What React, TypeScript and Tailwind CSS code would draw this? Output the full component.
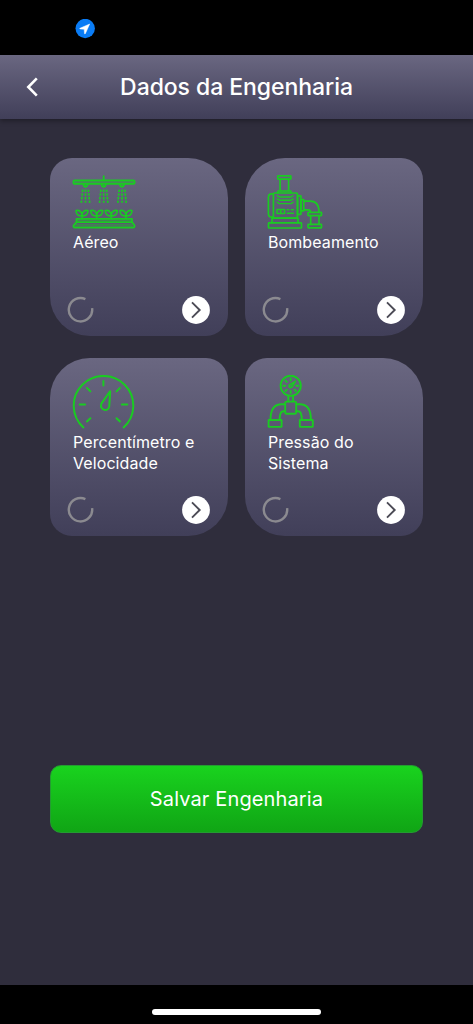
import type { ReactNode } from "react";

function SprinklerIcon() {
  return (
    <svg width="64" height="55" viewBox="0 0 64 55" fill="none" stroke="#1acb22" strokeWidth="1.8" strokeLinecap="round" strokeLinejoin="round">
      <rect x="1.4" y="5.4" width="61.2" height="3.4" rx="1" fill="#1acb22" fillOpacity="0.4" />
      <path d="M31.7 1.2V5" />
      {[13.5, 31.7, 50].map((x) => (
        <g key={x} transform={`translate(${x} 0)`}>
          <path d="M-2 9.2c0 3.4 4 3.4 4 0" />
          <path d="M0 14.6v13.2M-2.8 14.6l-1.4 13.2M2.8 14.6l1.4 13.2" strokeDasharray="2.4 1.3" strokeWidth="1.7" strokeLinecap="butt" />
        </g>
      ))}
      {[10, 24.7, 39.3, 54].map((x) => (
        <path
          key={x}
          transform={`translate(${x} 0)`}
          d="M0 43V40M0 40.6C-3.6 41.6-6 39.4-6 35.5c3.6-.6 6 1.2 6 5.1ZM0 40.6C3.6 41.6 6 39.4 6 35.5c-3.6-.6-6 1.2-6 5.1Z"
          strokeWidth="1.6"
        />
      ))}
      <path d="M4.5 47.6V43.8H60v3.8M4.5 47.2h55.8l2.3 3.4c.2 1.1-.4 1.9-1.3 1.9H2.7c-1 0-1.5-.8-1.2-1.9Z" />
      <path d="M6 45.4h53M4 49.8h56" strokeOpacity="0.4" />
    </svg>
  );
}

function PumpIcon() {
  return (
    <svg width="64" height="55" viewBox="0 0 64 55" fill="none" stroke="#1acb22" strokeWidth="1.7" strokeLinecap="round" strokeLinejoin="round">
      <rect x="10.7" y="0.9" width="13.2" height="3.2" rx="0.6" />
      <path d="M13.1 4.1V16M21.6 4.1V16M10.9 18v-2h13v2" />
      <rect x="6.4" y="18" width="24" height="25" rx="1" />
      <path d="M6.4 18.8H4.8c-2 0-3.4 1.4-3.4 3.4v16.6c0 2 1.4 3.4 3.4 3.4h1.6" />
      <path d="M10.3 20.6l2 1.4h11.8l2-1.4M10.3 23.9l2 1.4h11.8l2-1.4M10.3 27.2l2 1.4h11.8l2-1.4" strokeWidth="1.4" />
      <rect x="10" y="34.4" width="7.6" height="4" strokeWidth="1.5" />
      <path d="M13.8 34.4v4M20.2 34.8h1.5M24.4 34.8h2M20.2 38.2h6.2" strokeWidth="1.5" />
      <rect x="30.6" y="20.9" width="3.4" height="18.4" rx="0.5" />
      <rect x="34" y="24.7" width="2.8" height="11.2" rx="0.5" />
      <path d="M36.8 26.1h6.5c5.2 0 8.7 3.8 8.7 11.2M36.8 34.9h4.4c1.6 0 2.4.8 2.4 2.4" />
      <rect x="41" y="37.4" width="13.5" height="3.2" rx="0.5" />
      <path d="M43.7 40.6v8.8M52 40.6v8.8" />
      <rect x="41" y="49.4" width="13.5" height="3.4" rx="0.5" />
      <path d="M5 43.4v4.4M31 43.4v4.4M5 43.2h26" />
      <rect x="1.5" y="47.8" width="33" height="5.2" rx="0.6" />
    </svg>
  );
}

function GaugeIcon() {
  return (
    <svg width="64" height="55" viewBox="0 0 64 55" fill="none" stroke="#1acb22" strokeWidth="2" strokeLinecap="round" strokeLinejoin="round">
      <path d="M11.4 52.4A29.8 29.6 0 1 1 51.6 52.4" />
      <path d="M31.4 6v4.6M7.7 29.5h5.4M49.9 29.5h5.4M14.9 12.9l3.5 3.5M48 12.9l-3.5 3.5M18.4 43.2l-3.5 3.2M44.5 43.2l3.5 3.2" />
      <path d="M38.2 16.2 37.2 31.4C36.9 33.9 35 35.2 32.8 34.9c-2.8-.3-4.4-2.8-3.7-5.4.2-.9.7-1.6 1.1-2.2Z" />
    </svg>
  );
}

function PressureIcon() {
  return (
    <svg width="64" height="55" viewBox="0 0 64 55" fill="none" stroke="#1acb22" strokeWidth="1.9" strokeLinecap="round" strokeLinejoin="round">
      <circle cx="23.7" cy="10.8" r="10.1" />
      <path d="M23.7 3.4v2M16.3 10.8h2M29.1 10.8h2M18.5 5.6l1.3 1.3M18.5 16l1.3-1.3M28.9 16l-1.3-1.3M23.7 16v2" />
      <path d="M28.6 6 22.5 9.8a1.7 1.7 0 1 0 2.5 2.3Z" strokeWidth="1.4" fill="#1acb22" fillOpacity="0.5" />
      <path d="M21.3 21v5.6M26.1 21v5.6" />
      <rect x="18.2" y="26.6" width="11" height="12.2" rx="1.4" />
      <path d="M18.2 29.2h-3.6C7.6 29.2 3.5 34.6 3.5 44.7M18.2 36.2h-1.8c-2.5 0-3.8 2.2-3.8 8.5M29.2 29.2h3.6c7 0 11.1 5.4 11.1 15.5M29.2 36.2H31c2.5 0 3.8 2.2 3.8 8.5" />
      <rect x="1.6" y="45" width="13" height="6.9" rx="0.4" />
      <rect x="32.8" y="45" width="13" height="6.9" rx="0.4" />
    </svg>
  );
}

function Spinner() {
  return (
    <svg width="28" height="28" viewBox="0 0 28 28" fill="none" stroke="#8b8a90" strokeWidth="2.4">
      <path d="M18.4 3.1A11.7 11.7 0 1 0 25.1 12.2" />
    </svg>
  );
}

function Card({ icon, label, variant }: { icon: ReactNode; label: ReactNode; variant: "right" | "left" }) {
  const shape =
    variant === "right"
      ? "rounded-tl-[22px] rounded-tr-[40px] rounded-br-[22px] rounded-bl-[40px]"
      : "rounded-tl-[40px] rounded-tr-[22px] rounded-br-[40px] rounded-bl-[22px]";
  return (
    <button className={`flex h-[178px] w-[178px] flex-col bg-gradient-to-b from-[#6a6781] to-[#413f59] pt-[17px] text-left ${shape}`}>
      <div className="ml-[22px] h-[57px]">{icon}</div>
      <div className="ml-[23px] text-[16px] leading-[21px] tracking-[0.09px] whitespace-nowrap">{label}</div>
      <div className="mt-auto mb-3 flex items-center justify-between pr-[18px] pl-[17px]">
        <Spinner />
        <svg width="28" height="28" viewBox="0 0 28 28" fill="none">
          <circle cx="14" cy="14" r="13.9" fill="#fff" />
          <path d="M10 6.4 17.7 14 10 21.6" stroke="#4b4a55" strokeWidth="1.9" />
        </svg>
      </div>
    </button>
  );
}

export default function App() {
  return (
    <div className="flex h-[1024px] w-full flex-col bg-[#2f2d3c] font-['Inter','Liberation_Sans',sans-serif] text-white">
      <div className="h-[55px] shrink-0 bg-black pt-[19px] pl-[75px]">
        <svg width="20" height="20" viewBox="0 0 20 20">
          <circle cx="10.2" cy="9.5" r="9.7" fill="#0a7cf5" />
          <path d="M14.7 5 4.9 9.3q-.5.4.1.6l4.2.3.3 4.4q.3.7.8.1Z" fill="#fff" stroke="#fff" strokeWidth=".5" strokeLinejoin="round" />
        </svg>
      </div>
      <header className="grid h-16 shrink-0 grid-cols-[64px_1fr_64px] items-center bg-gradient-to-b from-[#6a6781] to-[#413f59] shadow-[0_2px_5px_rgba(0,0,0,0.35)]">
        <button className="pl-[25px]" aria-label="Voltar">
          <svg width="14" height="20" viewBox="0 0 14 20" fill="none" stroke="#fff" strokeWidth="2.6">
            <path d="M11.8 1.4 3.3 10l8.5 8.6" />
          </svg>
        </button>
        <h1 className="text-center text-[23px] font-medium tracking-[-0.06px] whitespace-nowrap">Dados da Engenharia</h1>
      </header>
      <main className="flex flex-1 flex-col px-[50px] pt-[39px]">
        <div className="grid grid-cols-[178px_178px] gap-x-[17px] gap-y-[22px]">
          <Card icon={<SprinklerIcon />} label="Aéreo" variant="right" />
          <Card icon={<PumpIcon />} label="Bombeamento" variant="left" />
          <Card icon={<GaugeIcon />} label={<>Percentímetro e<br />Velocidade</>} variant="left" />
          <Card icon={<PressureIcon />} label={<>Pressão do<br />Sistema</>} variant="right" />
        </div>
        <button className="mt-[229px] h-[68px] rounded-[11px] border border-[#249b32] bg-gradient-to-b from-[#19d31e] to-[#10a515] text-[20px] tracking-[0.13px]">
          Salvar Engenharia
        </button>
      </main>
      <footer className="flex h-[39px] shrink-0 justify-center bg-black pt-6">
        <div className="h-[6px] w-[169px] rounded-full bg-white" />
      </footer>
    </div>
  );
}
